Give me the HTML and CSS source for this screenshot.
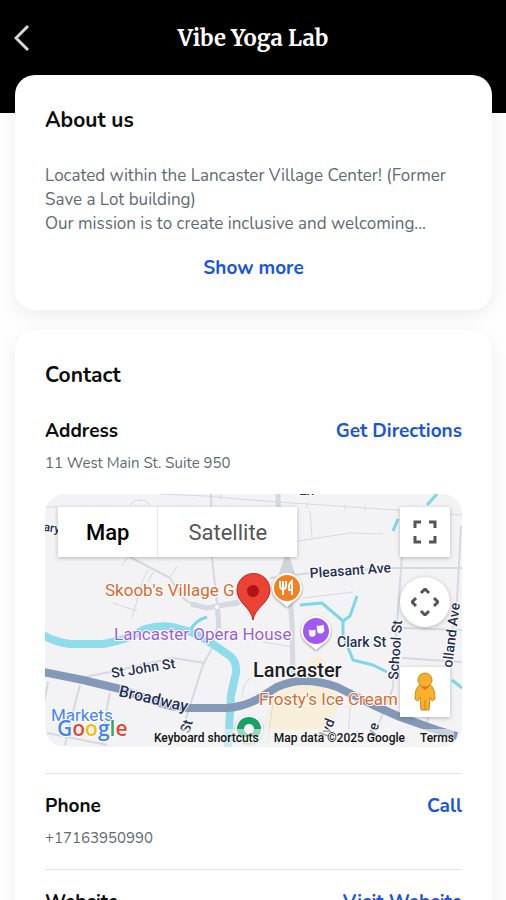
FILE: index.html
```html
<!DOCTYPE html>
<html lang="en">
  <head>
    <meta charset="UTF-8" />
    <meta name="viewport" content="width=device-width, initial-scale=1.0" />
    <title>Vibe Yoga Lab</title>
    <link rel="stylesheet" href="styles.css">
  </head>
  <body>
    <header class="header">
      <button class="back" type="button" aria-label="Back">
        <svg width="16" height="28" viewBox="0 0 16 28"><path d="M14 2 2 14l12 12" /></svg>
      </button>
      <h1>Vibe Yoga Lab</h1>
    </header>

    <main class="cards">
      <section class="card about">
        <h2>About us</h2>
        <p class="aboutText">
          Located within the Lancaster Village Center! (Former Save a Lot building)<br />
          Our mission is to create inclusive and welcoming...
        </p>
        <button class="link showMore" type="button">Show more</button>
      </section>

      <section class="card contact">
        <h2>Contact</h2>
        <div class="item">
          <div class="itemHead">
            <h3>Address</h3>
            <a class="link" href="#directions">Get Directions</a>
          </div>
          <p>11 West Main St. Suite 950</p>

          <div class="map">
            <svg class="mapArt" viewBox="0 0 417 253" preserveAspectRatio="xMidYMid slice">
              <rect width="417" height="253" fill="#f3f2f4" />
              <!-- parks -->
              <g fill="#f8efda">
                <path d="M228 202q10-12 30-12 26 2 37 12l-8 28q-12 12-36 9-24 2-32-8z" />
                <circle cx="272" cy="170" r="8" />
              </g>
              <!-- small streets -->
              <g class="street">
                <path d="M0 13h13M85 12q3-6 10-6t10 6M115 0l45 2 45 4 57 4 90 6 65 5M176 0v6M262 8v6M300 10v6M320 11v6" />
                <path d="M83 62l-6 10M103 76l-5 10M108 78l-5 10M132 72l-7 12M68 109l24 8M87 124l11-38" />
                <path d="M253 47l52-8 33 1M265 17l2 27M258 104l50-6M218 148l30 5" />
                <path d="M307 195l-4 45M228 210l-6 40M205 184q-8 8-8 20" />
              </g>
              <g class="street wide">
                <path d="M83 62l42 22 13 20q10 9 24 10l30-3 30-20" />
                <path d="M166 0l1 64 5 45 3 12-8 33-9 17-16 50-10 32" />
                <path d="M40 183l25-5 63-14 32 5M225 84l40-5 80-5h72" />
                <path d="M357 62l-5 67-4 65-20 50M416 32l-4 75-10 60-20 61" />
                <path d="M358 134l59 2M357 164l60 4" />
                <path d="M3 188l-5 26M35 191l-7 27-8 33M65 199l-3 15-5 37M2 239l60 12" />
              </g>
              <path class="street main" d="M233 0v10l9 51 5 68 1 50M172 110l2 24M146 110l16 4 32-6" />
              <path d="M240 62l-7 20h18l-7-20z" fill="#d0d5dc" />
              <circle cx="172" cy="113" r="2" fill="#fff" />
              <!-- creek -->
              <g class="water">
                <path d="M392 0l-10 11M353 25l-5 12M255 111l22-2 21 18 7-5 7-20" />
                <path d="M298 127v14l10 25 20 5 14 7M407 186l10 8" />
                <path d="M145 136q6-10 17-13" />
              </g>
              <path class="river" d="M-2 141q12 7 27 9h33q14-2 27-7l15-8q14-4 28-2l18 5 12 6 14 9 13 9q7 6 6 17l-5 22-3 52" />
              <!-- highway -->
              <path class="highway" d="M-2 178l40 8 37 9 37 13q16 6 33 6h37q16-1 31-9l19-12q14-6 26-6 18 0 34 6l36 18 27 12 37 13 20 6" />

              <!-- street names -->
              <g class="name">
                <text x="-2" y="37" transform="rotate(8 0 38)" font-size="12">ary</text>
                <text x="254" y="1">Ln</text>
                <text transform="translate(265 84) rotate(-4)">Pleasant Ave</text>
                <text x="292" y="153">Clark St</text>
                <text transform="translate(353 186) rotate(-86)">School St</text>
                <text transform="translate(407 174) rotate(-83)">olland Ave</text>
                <text transform="translate(67 184) rotate(-9)">St John St</text>
                <text transform="translate(73 202) rotate(13)" font-size="16">Broadway</text>
                <text transform="translate(144 240) rotate(-72)">St</text>
                <text transform="translate(283 244) rotate(-68)">lvd</text>
                <text transform="translate(330 244) rotate(-72)">ve</text>
              </g>
              <text class="town" x="208" y="183">Lancaster</text>

              <!-- places -->
              <g class="place">
                <text x="60" y="102" fill="#d9692c">Skoob's Village G</text>
                <text x="69" y="146" fill="#9b5ce0">Lancaster Opera House</text>
                <text x="214" y="211" fill="#d9692c">Frosty's Ice Cream</text>
                <text x="6" y="227" fill="#4285f4">Markets</text>
              </g>

              <!-- place pins -->
              <g class="pin">
                <path d="M242 113l-10-8a15 15 0 1 1 20 0z" />
                <path d="M271 156l-10-8a15 15 0 1 1 20 0z" />
                <circle cx="204" cy="235" r="14" />
              </g>
              <circle cx="242" cy="94" r="13" fill="#f58020" />
              <path d="M238 87v14M235 87v5q0 3 3 3t3-3v-5M247 101V87q-4 3-3 9h3" fill="none" stroke="#fff" stroke-width="2" />
              <circle cx="271" cy="137" r="13" fill="#a259f4" />
              <path d="M263 135q4 2 8 0v6q-3 4-7 1zM271 131q4 1 8-1l1 7q-3 5-8 2z" fill="#fff" stroke="#a259f4" stroke-width="1" />
              <path d="M204 223a12 12 0 0 1 9 20h-18a12 12 0 0 1 9-20z" fill="#18a366" />
              <circle cx="204" cy="235" r="5" fill="#fff" />

              <!-- studio marker -->
              <path d="M208 126c-2-13-16-17-16-30a16 16 0 0 1 33 0c0 13-15 17-17 30z" fill="#ea4335" stroke="#c5221f" stroke-width="1" />
              <circle cx="208" cy="97" r="6" fill="#b31412" />

              <text class="logo" x="12" y="242"><tspan fill="#4285f4">G</tspan><tspan fill="#ea4335">o</tspan><tspan fill="#fbbc04">o</tspan><tspan fill="#4285f4">g</tspan><tspan fill="#34a853">l</tspan><tspan fill="#ea4335">e</tspan></text>
            </svg>

            <div class="mapType">
              <button class="active" type="button">Map</button>
              <button type="button">Satellite</button>
            </div>
            <div class="mapTools">
              <button type="button" aria-label="Toggle fullscreen view">
                <svg width="24" height="24" viewBox="0 0 24 24"><path d="M2 8V2h6M16 2h6v6M22 16v6h-6M8 22H2v-6" /></svg>
              </button>
              <button class="round" type="button" aria-label="Map camera controls">
                <svg width="28" height="28" viewBox="0 0 28 28"><path d="M10 5l4-4 4 4M10 23l4 4 4-4M5 10l-4 4 4 4M23 10l4 4-4 4" /></svg>
              </button>
              <button class="pegman" type="button" aria-label="Street View">
                <svg width="24" height="40" viewBox="0 0 24 40">
                  <path d="M7 13Q2 15 2 27l3 2 2-4 1 13h8l1-13 2 4 3-2q0-12-5-14z" fill="#f9b02b" stroke="#c98a1b" />
                  <circle cx="12" cy="8" r="7" fill="#f9b02b" stroke="#c98a1b" />
                  <path d="M7 14q5 2 10 0l-5 4z" fill="#e0702a" />
                  <path d="M12 28v10" stroke="#c98a1b" />
                </svg>
              </button>
            </div>
            <div class="mapFooter">
              <button type="button">Keyboard shortcuts</button>
              <span>Map data ©2025 Google</span>
              <a href="#terms">Terms</a>
            </div>
          </div>
        </div>

        <div class="item">
          <div class="itemHead">
            <h3>Phone</h3>
            <a class="link" href="tel:+17163950990">Call</a>
          </div>
          <p>+17163950990</p>
        </div>

        <div class="item">
          <div class="itemHead">
            <h3>Website</h3>
            <a class="link" href="#website">Visit Website</a>
          </div>
        </div>
      </section>
    </main>
  </body>
</html>
```

FILE: styles.css
```css
* {
  box-sizing: border-box;
}
html {
  scrollbar-width: none;
}
body {
  margin: 0;
  background: #fefefe;
  color: #0c0c0c;
  font-family: Nunito, "Noto Sans", sans-serif;
}
h1,
h2,
h3,
p {
  margin: 0;
}
button {
  padding: 0;
  border: none;
  background: none;
  font-family: inherit;
  cursor: pointer;
}

/* header */
.header {
  display: grid;
  grid-template-columns: 40px 1fr 40px;
  align-items: center;
  height: 113px;
  padding-bottom: 37px;
  background: #000;
  color: #fff;
}
.header h1 {
  font: bold 22px/32px Merriweather, "Liberation Serif", serif;
  text-align: center;
}
.back {
  display: flex;
  padding-left: 14px;
}
.back path {
  fill: none;
  stroke: #d8d8d8;
  stroke-width: 3;
}

/* cards */
.cards {
  display: flex;
  flex-direction: column;
  gap: 20px;
  margin-top: -38px;
  padding: 0 14px 20px 15px;
}
.card {
  padding: 30px;
  border-radius: 20px;
  background: #fff;
  box-shadow: 0 5px 18px rgba(0, 0, 0, 0.07);
}
.card h2 {
  margin-bottom: 29px;
  font-size: 21px;
  font-weight: 700;
  line-height: 30px;
}
.about {
  display: flex;
  flex-direction: column;
}
.aboutText {
  color: #5f6b73;
  font-size: 17px;
  line-height: 24px;
}
.link {
  color: #1a56db;
  font-size: 19px;
  font-weight: 700;
  line-height: 24px;
  text-decoration: none;
}
.showMore {
  align-self: center;
  margin-top: 20px;
}

/* contact rows */
.item + .item {
  margin-top: 20px;
  padding-top: 20px;
  border-top: 1px solid #e4e4e4;
}
.itemHead {
  display: flex;
  justify-content: space-between;
}
.itemHead h3 {
  font-size: 19px;
  font-weight: 700;
  line-height: 24px;
}
.item p {
  margin-top: 10px;
  color: #5f6b73;
  font-size: 15px;
  line-height: 21px;
}

/* map */
.map {
  position: relative;
  height: 253px;
  margin: 20px 0 26px;
  border-radius: 20px;
  overflow: hidden;
  font-family: Roboto, sans-serif;
}
.mapArt {
  display: block;
  width: 100%;
  height: 100%;
}
.street,
.water,
.river,
.highway {
  fill: none;
  stroke-linejoin: round;
}
.street {
  stroke: #d5d9e0;
  stroke-width: 1;
}
.wide {
  stroke-width: 2;
}
.main {
  stroke-width: 5;
}
.water {
  stroke: #7fd6e6;
  stroke-width: 3;
}
.river {
  stroke: #8fdcea;
  stroke-width: 8;
}
.highway {
  stroke: #8499b8;
  stroke-width: 8;
}
.name,
.town,
.place,
.logo {
  stroke: #fff;
  stroke-width: 2;
  stroke-linejoin: round;
  paint-order: stroke;
}
.name {
  fill: #1f2f55;
  font-size: 14px;
  font-weight: 500;
}
.town {
  fill: #202124;
  font-size: 20px;
  font-weight: 500;
}
.place {
  font-size: 17px;
}
.logo {
  font-family: "Open Sans", sans-serif;
  font-size: 21px;
  font-weight: 600;
}
.pin {
  fill: #fff;
  filter: drop-shadow(0 1px 1px rgba(0, 0, 0, 0.4));
}
.mapType {
  position: absolute;
  top: 13px;
  left: 13px;
  display: flex;
  background: #fff;
  box-shadow: 0 1px 4px rgba(0, 0, 0, 0.25);
}
.mapType button {
  height: 50px;
  padding: 0 30px;
  color: #565656;
  font-size: 22px;
}
.mapType button + button {
  border-left: 1px solid #e6e6e6;
}
.mapType .active {
  padding: 0 28px;
  color: #000;
  font-weight: 500;
}
.mapTools {
  position: absolute;
  top: 13px;
  right: 12px;
  display: flex;
  flex-direction: column;
  gap: 20px;
}
.mapTools button {
  display: flex;
  align-items: center;
  justify-content: center;
  width: 50px;
  height: 50px;
  background: #fff;
  box-shadow: 0 1px 4px rgba(0, 0, 0, 0.25);
}
.mapTools .round {
  border-radius: 50%;
}
.mapTools .pegman {
  margin-top: 20px;
}
.mapTools button:not(.pegman) path {
  fill: none;
  stroke: #555;
  stroke-width: 3;
}
.mapFooter {
  position: absolute;
  right: 8px;
  bottom: 0;
  display: flex;
  gap: 15px;
  background: rgba(245, 245, 245, 0.6);
  color: #111;
  font-size: 12px;
  line-height: 18px;
}
.mapFooter button,
.mapFooter a {
  color: inherit;
  font-size: 12px;
  text-decoration: none;
}
.mapFooter > * {
  font-weight: 500;
}
```
